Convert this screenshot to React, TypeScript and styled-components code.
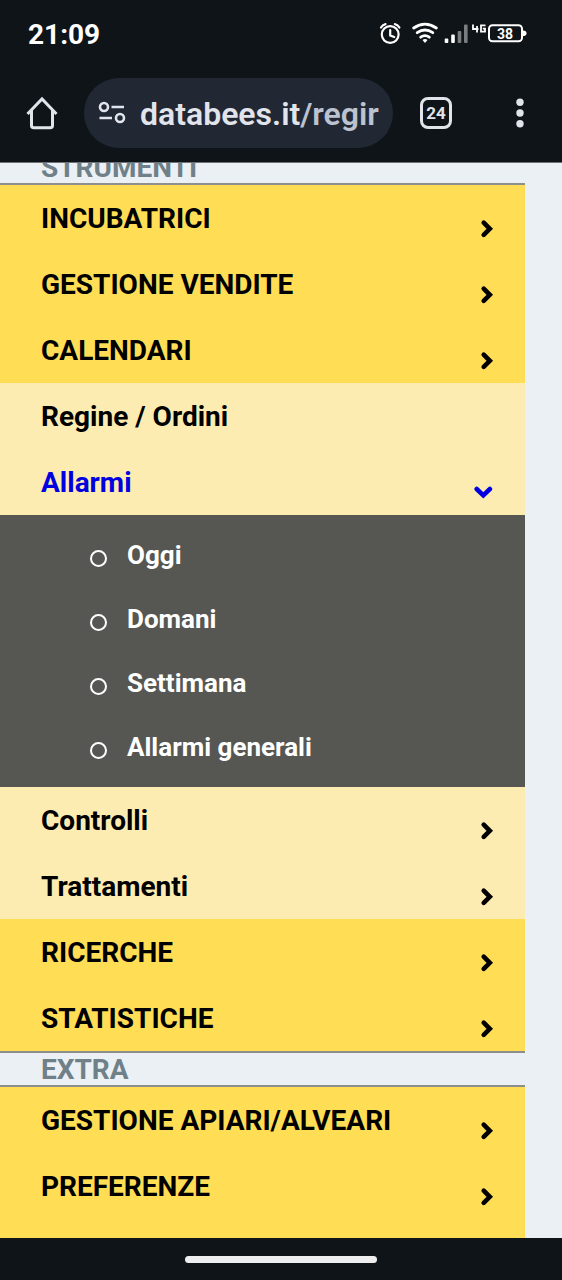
import React from "react";
import styled, { createGlobalStyle } from "styled-components";

const GlobalStyle = createGlobalStyle`
  * { box-sizing: border-box; }
  body { margin: 0; background: #0f1418; font-family: Roboto, "Liberation Sans", sans-serif; }
  button { font: inherit; color: inherit; background: none; border: 0; padding: 0; margin: 0; cursor: pointer; }
  a { color: inherit; text-decoration: none; }
  ul { list-style: none; margin: 0; padding: 0; }
  svg { display: block; }
`;

const Screen = styled.div`
  display: flex;
  flex-direction: column;
  height: 100vh;
  overflow: hidden;
`;

const StatusBar = styled.header`
  display: flex;
  align-items: center;
  justify-content: space-between;
  flex: none;
  height: 70px;
  padding: 0 35px 0 28px;
  color: #ffffff;
`;

const Clock = styled.time`
  font-size: 28px;
  line-height: 36px;
  font-weight: 700;
`;

const StatusIcons = styled.div`
  display: flex;
  align-items: center;
  height: 28px;
  margin-bottom: 2px;
`;

const BrowserBar = styled.div`
  display: flex;
  align-items: center;
  flex: none;
  height: 93px;
  padding: 0 32px 6px 24px;
  color: #e2e4ec;
  border-bottom: 1px solid #6d7278;
`;

const IconButton = styled.button`
  display: flex;
  align-items: center;
  justify-content: center;
  flex: none;
  width: 36px;
  height: 48px;
`;

const MenuButton = styled(IconButton)`
  width: 20px;
  margin-left: 56px;
`;

const AddressPill = styled.button`
  display: flex;
  align-items: center;
  flex: 1;
  min-width: 0;
  height: 70px;
  margin: 0 25px 0 24px;
  padding: 0 12px 0 14px;
  gap: 14px;
  border-radius: 35px;
  background: #212834;
`;

const Address = styled.span`
  flex: 1;
  min-width: 0;
  padding-top: 2px;
  overflow: hidden;
  white-space: nowrap;
  text-align: left;
  font-size: 32px;
  line-height: 40px;
  font-weight: 600;
`;

const AddressPath = styled.span`
  color: #bcc2d0;
`;

const PageView = styled.main`
  flex: 1;
  min-height: 0;
  overflow: hidden;
  padding-right: 37px;
  background: #ebf0f5;
`;

const Sidebar = styled.nav`
  display: flex;
  flex-direction: column;
  min-height: calc(100% + 14px);
  margin-top: -14px;
  background: #ffdd55;
`;

const SectionTitle = styled.h2`
  height: 36px;
  margin: 0;
  padding-left: 41px;
  border-top: 2px solid #8e8e8c;
  border-bottom: 2px solid #8e8e8c;
  background: #ebf0f5;
  color: #708088;
  font-size: 28px;
  line-height: 34px;
  font-weight: 700;
`;

const MenuRow = styled.a<{ $light?: boolean; $active?: boolean }>`
  display: flex;
  justify-content: space-between;
  height: 66px;
  padding: 17px 31px 0 41px;
  background: ${(p) => (p.$light ? "#fcecb1" : "#ffdd55")};
  color: ${(p) => (p.$active ? "#0000e0" : "#000000")};
  font-size: 28px;
  line-height: 34px;
  font-weight: 700;
  white-space: nowrap;
`;

const Chevron = styled.svg<{ $open?: boolean }>`
  flex: none;
  width: ${(p) => (p.$open ? "20px" : "14px")};
  height: 20px;
  margin-top: 17px;
  fill: none;
  stroke: currentColor;
  stroke-width: 5;
  stroke-linecap: round;
`;

const SubMenu = styled.ul`
  padding: 8px 0;
  background: #565752;
  color: #ffffff;
`;

const SubLink = styled.a`
  display: flex;
  align-items: center;
  height: 64px;
  padding-left: 90px;
  gap: 20px;
  font-size: 26px;
  line-height: 32px;
  font-weight: 700;
`;

const Ring = styled.span`
  width: 17px;
  height: 17px;
  margin-top: 6px;
  border: 2px solid #ffffff;
  border-radius: 50%;
`;

const GestureBar = styled.footer`
  display: flex;
  align-items: center;
  justify-content: center;
  flex: none;
  height: 42px;
`;

const GestureHandle = styled.div`
  width: 34%;
  height: 7px;
  border-radius: 4px;
  background: #eeeeee;
`;

function StatusGlyphs() {
  return (
    <svg width="150" height="28" viewBox="377 20 150 28" role="img" aria-label="Alarm, Wi-Fi, 4G, battery 38%">
      <g fill="none" stroke="#fff" strokeLinecap="round">
        <circle cx="390.200" cy="34.500" r="8.400" strokeWidth="2.200" />
        <path d="M390.200 30v5.500l4 1.600" strokeWidth="2.200" />
        <path d="M381 27.500q1.500-2.700 4.500-3.400M399.400 27.500q-1.500-2.700-4.500-3.400" strokeWidth="2.200" />
        <path d="M413.700 28q11.300-7.600 22.600 0" strokeWidth="2.800" />
        <path d="M417.200 32.700q7.800-5.500 15.600 0" strokeWidth="2.800" />
        <path d="M420.700 37.200q4.300-3.200 8.600 0" strokeWidth="2.800" />
      </g>
      <path d="M422.500 40q2.500-1.800 5 0l-2.500 3z" fill="#fff" />
      <g fill="#fff">
        <rect x="444.700" y="38.500" width="3.600" height="4.500" rx="1" />
        <rect x="451.200" y="34.500" width="3.600" height="8.500" rx="1" />
        <rect x="457.700" y="31" width="3.600" height="12" rx="1" opacity=".45" />
        <rect x="464" y="24.500" width="3.600" height="18.500" rx="1" opacity=".45" />
      </g>
      <g fill="none" stroke="#fff" strokeWidth="1.800">
        <path d="M473 24.500v4.500h5.500M477 26v6.500" />
        <path d="M485.500 25.400h-4.500v6.200h4v-3h-2.200" />
      </g>
      <rect x="489" y="25.200" width="33" height="16" rx="3.500" fill="none" stroke="#fff" strokeWidth="2" />
      <path d="M523 30.500q3.500 0 3.500 2.800t-3.500 2.800z" fill="#fff" />
      <text x="505" y="38.500" textAnchor="middle" fill="#fff" fontSize="14" fontWeight="700" fontFamily="Roboto, sans-serif">38</text>
    </svg>
  );
}

function HomeIcon() {
  return (
    <svg width="34" height="36" viewBox="0 0 34 36" fill="none" stroke="currentColor" strokeWidth="3" strokeLinejoin="round">
      <path d="M2.500 19L17 4l14.500 15" strokeLinejoin="miter" />
      <path d="M6.500 15v15.500q0 2.300 2.300 2.300h16.400q2.300 0 2.300-2.300V15" />
    </svg>
  );
}

function SiteSettingsIcon() {
  return (
    <svg width="28" height="24" viewBox="0 0 28 24" fill="none" stroke="currentColor" strokeWidth="2.600">
      <circle cx="6" cy="6" r="4" />
      <path d="M13.500 6H26M1.500 17H14" />
      <circle cx="22" cy="17" r="4" />
    </svg>
  );
}

function TabsIcon() {
  return (
    <svg width="32" height="32" viewBox="0 0 32 32">
      <rect x="1.500" y="1.500" width="29" height="29" rx="6.500" fill="none" stroke="currentColor" strokeWidth="3" />
      <text x="16" y="22" textAnchor="middle" fill="currentColor" fontSize="17" fontWeight="700" fontFamily="Roboto, sans-serif">24</text>
    </svg>
  );
}

function MoreIcon() {
  return (
    <svg width="8" height="30" viewBox="0 0 8 30" fill="currentColor">
      <circle cx="4" cy="4.300" r="3.700" />
      <circle cx="4" cy="15" r="3.700" />
      <circle cx="4" cy="25.700" r="3.700" />
    </svg>
  );
}

type Item = { label: string; light?: boolean; arrow?: "right" | "down" };

const toolsTop: Item[] = [
  { label: "INCUBATRICI", arrow: "right" },
  { label: "GESTIONE VENDITE", arrow: "right" },
  { label: "CALENDARI", arrow: "right" },
  { label: "Regine / Ordini", light: true },
  { label: "Allarmi", light: true, arrow: "down" },
];

const alarms = ["Oggi", "Domani", "Settimana", "Allarmi generali"];

const toolsBottom: Item[] = [
  { label: "Controlli", light: true, arrow: "right" },
  { label: "Trattamenti", light: true, arrow: "right" },
  { label: "RICERCHE", arrow: "right" },
  { label: "STATISTICHE", arrow: "right" },
];

const extras: Item[] = [
  { label: "GESTIONE APIARI/ALVEARI", arrow: "right" },
  { label: "PREFERENZE", arrow: "right" },
];

function MenuItems({ items }: { items: Item[] }) {
  return (
    <>
      {items.map(({ label, light, arrow }) => (
        <MenuRow key={label} href="#" $light={light} $active={arrow === "down"}>
          {label}
          {arrow === "right" && (
            <Chevron viewBox="0 0 14 20" aria-hidden="true">
              <path d="M3.700 3.700L9.800 9.800L3.700 15.900" strokeWidth="4.600" />
            </Chevron>
          )}
          {arrow === "down" && (
            <Chevron $open viewBox="0 0 20 20" aria-hidden="true">
              <path d="M2.700 6L9.300 12.300L15.900 6" strokeWidth="4.600" />
            </Chevron>
          )}
        </MenuRow>
      ))}
    </>
  );
}

export default function App() {
  return (
    <>
      <GlobalStyle />
      <Screen>
        <StatusBar>
          <Clock>21:09</Clock>
          <StatusIcons>
            <StatusGlyphs />
          </StatusIcons>
        </StatusBar>
        <BrowserBar>
          <IconButton aria-label="Home">
            <HomeIcon />
          </IconButton>
          <AddressPill>
            <SiteSettingsIcon />
            <Address>
              databees.it<AddressPath>/regir</AddressPath>
            </Address>
          </AddressPill>
          <IconButton aria-label="Open tabs">
            <TabsIcon />
          </IconButton>
          <MenuButton aria-label="More options">
            <MoreIcon />
          </MenuButton>
        </BrowserBar>
        <PageView>
          <Sidebar>
            <SectionTitle>STRUMENTI</SectionTitle>
            <MenuItems items={toolsTop} />
            <SubMenu>
              {alarms.map((label) => (
                <li key={label}>
                  <SubLink href="#">
                    <Ring />
                    {label}
                  </SubLink>
                </li>
              ))}
            </SubMenu>
            <MenuItems items={toolsBottom} />
            <SectionTitle>EXTRA</SectionTitle>
            <MenuItems items={extras} />
          </Sidebar>
        </PageView>
        <GestureBar>
          <GestureHandle />
        </GestureBar>
      </Screen>
    </>
  );
}
